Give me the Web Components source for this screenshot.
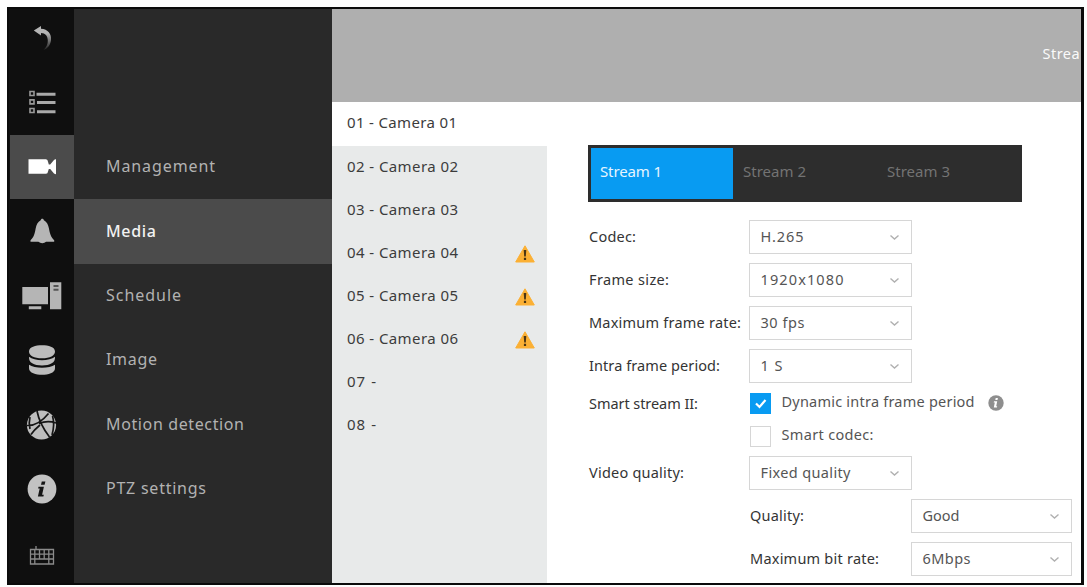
<!DOCTYPE html>
<html lang="en">
<head>
<meta charset="utf-8">
<title>Camera settings</title>
<style>
	html { background: #fdfdfd; }
	body { margin: 0; padding: 7px 0 0 7px; height: 580px; overflow: hidden; font: 15px/20px "Noto Sans", "Open Sans", sans-serif; }
</style>
</head>
<body>
<settings-window></settings-window>

<script>
const ICONS = {
	back: '<defs><linearGradient id="g" x1="0" y1="0" x2="0" y2="1"><stop offset=".3" stop-color="#b4b4b4"/><stop offset="1" stop-color="#222"/></linearGradient></defs><path fill="url(#g)" d="M11.800 10.500 19 6v2.700C26 9 29.700 14 29 20c-.5 4.500-3 8.500-7.500 10 3-2.800 4.500-6 4.300-9.500-.2-4.500-2.500-7.300-6.800-7.400V15.500z"/>',
	list: '<g fill="none" stroke="#9a9a9a" stroke-width="1.600"><path d="M8 8.500h4v4H8zM8 16.900h4v4H8zM8 25.500h4v4H8z"/></g><path stroke="#aaa" stroke-width="3" d="M14.500 11.300H33.500M15 19.500h18.500M15 28.700h18.500"/>',
	camera: '<path fill="#fff" d="M6.500 12.300H24q1.800 0 2 2.500l.8 2.700h1.400l3.800-4.600q1-.8 2-.6v14.900q-1 0-2-.7l-3.800-4.500h-1.400l-.8 2.500q-.2 2.300-2 2.300H6.500z"/>',
	bell: '<path fill="#b5b5b5" d="M20.300 6.800c1 0 1.400.7 1.600 1.500 3 1.500 4.300 4.500 5 8 1 5.500 1.900 8.700 5.300 11.900v1.600H8.500v-1.600c3.600-3.200 4.200-6.400 5.200-11.900.7-3.500 2-6.500 5-8 .2-.8.600-1.500 1.600-1.500zM16 29.500h8.500q-4.200 3.500-8.500 0z"/>',
	system: '<path fill="#b5b5b5" d="M.3 11H26v17.200H.3zM6.800 30.200h12.500v3H6.800zM28 6.300h11.300v26.900H28z"/><path stroke="#555" stroke-width="2" d="M31.500 10h5M31.500 13.700h5"/>',
	disks: '<path fill="#bcbcbc" d="M7 11.500C7 7 13.500 5.300 20 5.300S33 7 33 11.500c0 4-5 6.800-13 6.800S7 15.500 7 11.500zM7 16.800c5.500 4.500 20.500 4.500 26 0 .6 6-5 8.700-13 8.700S6.400 22.800 7 16.800zM7 24.700c5.500 4 20.500 4 26 0v3.500c0 4.800-7 6.500-13 6.500S7 33 7 28.200z"/>',
	globe: '<circle cx="19.500" cy="20" r="14.600" fill="#bdbdbd"/><g fill="none" stroke="#151515" stroke-width="1.700"><path d="M15 6Q17.500 19 27.500 32M5 20.500Q16.500 21 26.500 8.500M17 18.500Q25.500 15 34 18M18 20Q12 25 9 29.500M30.500 11Q33 19 30 30M8 12Q6.500 18 8 24"/></g>',
	info: '<circle cx="20" cy="20" r="14.400" fill="#c2c2c2"/><path fill="#151515" d="M19.800 12.500h3.600l-.8 3.200H19zM16.500 17.800h5.400l-1.800 8h1.700l-.4 1.600h-5.500l1.800-8h-1.600z"/>',
	keyboard: '<path fill="none" stroke="#8a8a8a" stroke-width="1.300" d="M8.500 15.500h23V30h-23zM8.500 20.200h23M8.500 25h23M12.800 15.500V30M17.500 15.500V25M22.200 15.500V25M26.800 15.500V30M14 15.500V12"/>'
};

// <fit-text width="n">: one line of text, tracked out or in to n pixels.
class FitText extends HTMLElement {
	connectedCallback() {
		this.attachShadow({mode: "open"}).innerHTML = "<style>:host { display: block; } span { display: inline-block; white-space: pre; }</style><span></span>";
		const span = this.shadowRoot.querySelector("span");
		span.textContent = this.getAttribute("text");
		const width = Number(this.getAttribute("width"));
		const count = span.textContent.length - 1;
		if (width && count > 0) span.style.letterSpacing = (width - span.getBoundingClientRect().width) / count + "px";
	}
}

// <rail-item icon="..." [active]>
class RailItem extends HTMLElement {
	connectedCallback() {
		this.attachShadow({mode: "open"}).innerHTML = `
			<style>
				:host { display: flex; align-items: center; justify-content: center; }
				:host([active]) { background: #4b4b4b; }
				svg { width: 40px; height: 40px; display: block; }
			</style>
			<svg viewBox="0 0 40 40">${ICONS[this.getAttribute("icon")]}</svg>`;
	}
}

// <menu-item text width [active]>
class MenuItem extends HTMLElement {
	connectedCallback() {
		this.attachShadow({mode: "open"}).innerHTML = `
			<style>
				:host { display: flex; align-items: center; padding: 0 0 2px 32px; color: #b2b2b2; box-sizing: border-box; font-size: 16px; }
				:host([active]) { background: #4b4b4b; color: #f2f2f2; font-weight: 500; }
			</style>
			<fit-text text="${this.getAttribute("text")}" width="${this.getAttribute("width")}"></fit-text>`;
	}
}

// <camera-row text width [active] [warning]>
class CameraRow extends HTMLElement {
	connectedCallback() {
		const warning = `<svg width="20" height="18" viewBox="0 0 20 18"><path fill="#fbb034" d="M10 .8 19.300 17H.7z" stroke="#fbb034" stroke-linejoin="round"/><path fill="#4a3514" d="M8.700 5h2.600l-.5 6.500H9.200zM8.900 12.700h2.200v2.200H8.900z"/></svg>`;
		this.attachShadow({mode: "open"}).innerHTML = `
			<style>
				:host { display: flex; align-items: center; justify-content: space-between; height: 43px; padding: 0 12px 3px 15px; box-sizing: border-box; color: #3c3c3c; font-size: 15px; }
				:host([active]) { background: #fff; height: 44px; }
				svg { margin-top: 4px; flex: none; }
			</style>
			<fit-text text="${this.getAttribute("text")}" width="${this.getAttribute("width")}"></fit-text>
			${this.hasAttribute("warning") ? warning : ""}`;
	}
}

class StreamTabs extends HTMLElement {
	connectedCallback() {
		this.attachShadow({mode: "open"}).innerHTML = `
			<style>
				:host { display: grid; grid-template-columns: 142px 143px 1fr; width: 434px; height: 57px; padding: 3px; gap: 1px; box-sizing: border-box; background: #2d2d2d; color: #737373; }
				div { display: flex; align-items: center; padding: 0 0 4px 9px; }
				.on { background: #089bf2; color: #e6f5ff; }
			</style>
			<div class="on"><fit-text text="Stream 1" width="62"></fit-text></div>
			<div><fit-text text="Stream 2" width="63"></fit-text></div>
			<div><fit-text text="Stream 3" width="63"></fit-text></div>`;
	}
}

// <select-box text width>
class SelectBox extends HTMLElement {
	connectedCallback() {
		this.attachShadow({mode: "open"}).innerHTML = `
			<style>
				:host { display: flex; align-items: center; justify-content: space-between; height: 34px; padding: 0 11px 2px 11px; box-sizing: border-box; border: 1px solid #d6d6d6; background: #fff; color: #555; font-size: 14.5px; }
				svg { margin-top: 3px; flex: none; }
			</style>
			<fit-text text="${this.getAttribute("text")}" width="${this.getAttribute("width")}"></fit-text>
			<svg width="11" height="7" viewBox="0 0 11 7"><path d="M1.500 1.500 5.500 5l4-3.500" fill="none" stroke="#b0b0b0" stroke-width="1.400"/></svg>`;
	}
}

// <check-box text width [checked]>, with a slot for what follows the text
class CheckBox extends HTMLElement {
	connectedCallback() {
		this.attachShadow({mode: "open"}).innerHTML = `
			<style>
				:host { display: flex; align-items: center; height: 22px; color: #555; font-size: 14.5px; }
				i { display: block; flex: none; width: 21px; height: 21px; margin: 0 11px 0 1px; box-sizing: border-box; border: 1px solid #d6d6d6; }
				fit-text { margin-top: -4px; }
				:host([checked]) i { background: #089bf2; border-color: #089bf2; }
				:host([checked]) path { stroke: #fff; }
				svg { display: block; }
				path { fill: none; stroke: none; stroke-width: 2.200; }
			</style>
			<i><svg width="19" height="19" viewBox="0 0 19 19"><path d="M5 9.500 8.500 13l6-7"/></svg></i>
			<fit-text text="${this.getAttribute("text")}" width="${this.getAttribute("width")}"></fit-text>
			<slot></slot>`;
	}
}

// <form-row text width>: label on the left, control in the slot
class FormRow extends HTMLElement {
	connectedCallback() {
		this.attachShadow({mode: "open"}).innerHTML = `
			<style>
				:host { display: grid; grid-template-columns: 160px 163px; color: #343434; font-size: 14.5px; height: 34px; }
				:host([nested]) { grid-template-columns: 161px 161px; margin-left: 161px; }
				:host([tall]) { height: 55px; }
				fit-text { margin: 6px 0 0 .5px; }
				:host([tall]) fit-text { margin-top: 0; }
			</style>
			<fit-text text="${this.getAttribute("text")}" width="${this.getAttribute("width")}"></fit-text>
			<div><slot></slot></div>`;
	}
}

class SettingsWindow extends HTMLElement {
	connectedCallback() {
		this.attachShadow({mode: "open"}).innerHTML = `
			<style>
				:host { display: grid; grid-template-columns: 65px 258px 1fr; width: 1077px; height: 578px; box-sizing: border-box; border: solid #0a0a0a; border-width: 2px 3px 2px 2px; overflow: hidden; background: #fff; }
				.rail { display: grid; grid-template-rows: 61.6px repeat(8, 64.4px); background: #0f0f0f; height: 574px; overflow: hidden; padding-left: 1px; }
				.menu { display: grid; grid-auto-rows: 64.4px; align-content: start; padding-top: 126px; background: #292929; overflow: hidden; }
				.main { display: grid; grid-template-rows: 92.5px 1fr; overflow: hidden; }
				header { display: flex; align-items: center; justify-content: flex-end; background: #afafaf; color: #fafafa; padding: 0 1px 4px 0; font-size: 14.5px; }
				.body { display: grid; grid-template-columns: 215px 1fr; }
				.cameras { background: #e8eaea; }
				.form { padding: 43px 0 0 41px; }
				.rows { display: grid; gap: 9px; padding: 18.500px 0 0 .5px; align-content: start; }
				check-box { margin-top: -1px; }
				check-box + check-box { margin-top: 11px; }
				form-row[tall] { margin: 1px 0 -1px; }
				.hint { margin: 0 0 1px 13px; flex: none; }
			</style>
			<nav class="rail">
				<rail-item icon="back"></rail-item>
				<rail-item icon="list"></rail-item>
				<rail-item icon="camera" active></rail-item>
				<rail-item icon="bell"></rail-item>
				<rail-item icon="system"></rail-item>
				<rail-item icon="disks"></rail-item>
				<rail-item icon="globe"></rail-item>
				<rail-item icon="info"></rail-item>
				<rail-item icon="keyboard"></rail-item>
			</nav>
			<nav class="menu">
				<menu-item text="Management" width="109"></menu-item>
				<menu-item text="Media" width="50" active></menu-item>
				<menu-item text="Schedule" width="75"></menu-item>
				<menu-item text="Image" width="51"></menu-item>
				<menu-item text="Motion detection" width="138"></menu-item>
				<menu-item text="PTZ settings" width="100"></menu-item>
			</nav>
			<div class="main">
				<header><fit-text text="Strea" width="37"></fit-text></header>
				<div class="body">
					<div class="cameras">
						<camera-row text="01 - Camera 01" width="110" active></camera-row>
						<camera-row text="02 - Camera 02" width="111"></camera-row>
						<camera-row text="03 - Camera 03" width="111"></camera-row>
						<camera-row text="04 - Camera 04" width="111" warning></camera-row>
						<camera-row text="05 - Camera 05" width="111" warning></camera-row>
						<camera-row text="06 - Camera 06" width="111" warning></camera-row>
						<camera-row text="07 -" width="29"></camera-row>
						<camera-row text="08 -" width="29"></camera-row>
					</div>
					<div class="form">
						<stream-tabs></stream-tabs>
						<div class="rows">
							<form-row text="Codec:" width="47"><select-box text="H.265" width="43"></select-box></form-row>
							<form-row text="Frame size:" width="80"><select-box text="1920x1080" width="83"></select-box></form-row>
							<form-row text="Maximum frame rate:" width="152"><select-box text="30 fps" width="44"></select-box></form-row>
							<form-row text="Intra frame period:" width="131"><select-box text="1 S" width="22"></select-box></form-row>
							<form-row text="Smart stream II:" width="109" tall>
								<check-box text="Dynamic intra frame period" width="193" checked>
									<svg class="hint" width="16" height="16" viewBox="0 0 16 16"><circle cx="8" cy="8" r="7.700" fill="#8e8e8e"/><path fill="#fff" d="M7.700 3h2.200l-.4 2H7.300zM6 6.200h3.200l-1 5h1l-.3 1.400H5.800l1-5H5.700z"/></svg>
								</check-box>
								<check-box text="Smart codec:" width="92"></check-box>
							</form-row>
							<form-row text="Video quality:" width="95"><select-box text="Fixed quality" width="90"></select-box></form-row>
							<form-row text="Quality:" width="54" nested><select-box text="Good" width="37"></select-box></form-row>
							<form-row text="Maximum bit rate:" width="129" nested><select-box text="6Mbps" width="48"></select-box></form-row>
						</div>
					</div>
				</div>
			</div>`;
	}
}

customElements.define("fit-text", FitText);
customElements.define("rail-item", RailItem);
customElements.define("menu-item", MenuItem);
customElements.define("camera-row", CameraRow);
customElements.define("stream-tabs", StreamTabs);
customElements.define("select-box", SelectBox);
customElements.define("check-box", CheckBox);
customElements.define("form-row", FormRow);
customElements.define("settings-window", SettingsWindow);
</script>
</body>
</html>
